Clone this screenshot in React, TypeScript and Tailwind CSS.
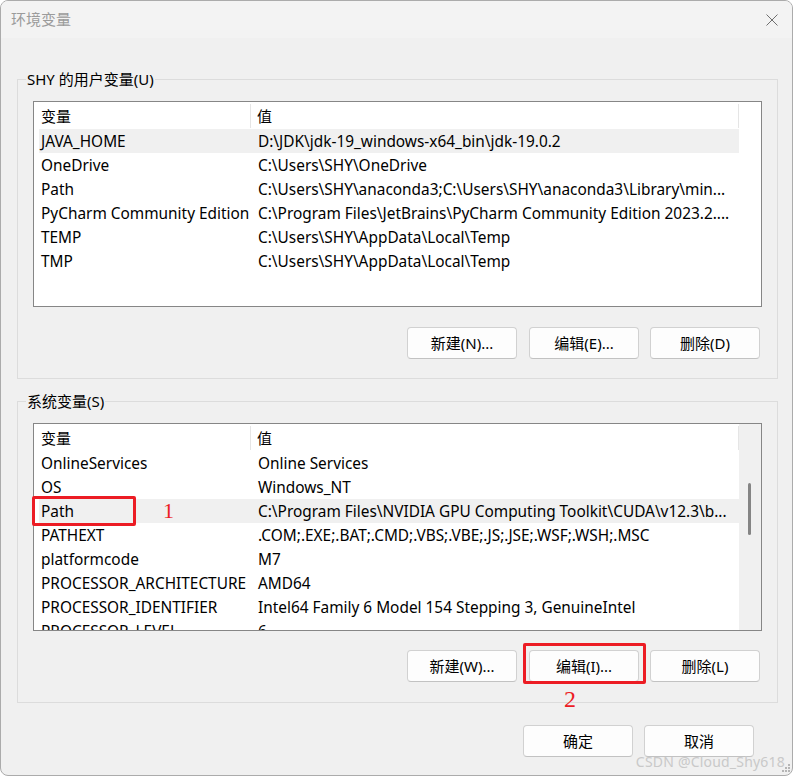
import React from 'react';

type Row = [string, string];

const userVars: Row[] = [
  ['JAVA_HOME', 'D:\\JDK\\jdk-19_windows-x64_bin\\jdk-19.0.2'],
  ['OneDrive', 'C:\\Users\\SHY\\OneDrive'],
  ['Path', 'C:\\Users\\SHY\\anaconda3;C:\\Users\\SHY\\anaconda3\\Library\\min...'],
  ['PyCharm Community Edition', 'C:\\Program Files\\JetBrains\\PyCharm Community Edition 2023.2....'],
  ['TEMP', 'C:\\Users\\SHY\\AppData\\Local\\Temp'],
  ['TMP', 'C:\\Users\\SHY\\AppData\\Local\\Temp'],
];

const sysVars: Row[] = [
  ['OnlineServices', 'Online Services'],
  ['OS', 'Windows_NT'],
  ['Path', 'C:\\Program Files\\NVIDIA GPU Computing Toolkit\\CUDA\\v12.3\\b...'],
  ['PATHEXT', '.COM;.EXE;.BAT;.CMD;.VBS;.VBE;.JS;.JSE;.WSF;.WSH;.MSC'],
  ['platformcode', 'M7'],
  ['PROCESSOR_ARCHITECTURE', 'AMD64'],
  ['PROCESSOR_IDENTIFIER', 'Intel64 Family 6 Model 154 Stepping 3, GenuineIntel'],
  ['PROCESSOR_LEVEL', '6'],
];

// 列表框：表头 + 行，可选滚动条
function VarList({
  rows,
  selected,
  scroll,
  heightClass,
  children,
}: {
  rows: Row[];
  selected: number;
  scroll?: boolean;
  heightClass: string;
  children?: React.ReactNode;
}) {
  return (
    <div className={`relative ${heightClass} border border-[#868686] bg-white flex`}>
      <div className="w-[705px] overflow-hidden flex flex-col">
        <div className="ml-[5px] h-[27px] shrink-0 flex items-stretch pt-[2px] pb-[1px] text-[15px]">
          <div className="w-[212px] pl-[2px] flex items-center border-r border-[#e5e5e5]">变量</div>
          <div className="flex-1 pl-[6px] flex items-center border-r border-[#e5e5e5]">值</div>
        </div>
        {rows.map(([name, value], i) => (
          <div
            key={name + i}
            className={`ml-[5px] h-[24px] shrink-0 flex items-center pt-[2px] text-[15.4px] whitespace-nowrap ${
              i === selected ? 'bg-[#f0f0f0]' : ''
            }`}
          >
            <div className="w-[212px] pl-[2px] overflow-hidden">{name}</div>
            <div className="flex-1 pl-[7px] overflow-hidden">{value}</div>
          </div>
        ))}
      </div>
      {scroll ? (
        <div className="flex-1 bg-[#f0f0f0] pt-[59px]">
          <div className="ml-[9px] w-[3px] h-[52px] rounded-full bg-[#858585]" />
        </div>
      ) : (
        <div className="flex-1" />
      )}
      {children}
    </div>
  );
}

function Btn({ label }: { label: string }) {
  return (
    <button className="w-[110px] h-[32px] rounded-[4px] border border-[#d1d1d1] border-b-[#c2c2c2] bg-[#fdfdfd] text-[15px] text-black flex items-center justify-center">
      {label}
    </button>
  );
}

function Group({ label, children, className }: { label: string; children: React.ReactNode; className?: string }) {
  return (
    <div className={`relative border border-[#dcdcdc] ${className ?? ''}`}>
      <span className="absolute left-[8px] -top-[12px] px-[1px] bg-[#f0f0f0] text-[15px] leading-[22px]">
        {label}
      </span>
      {children}
    </div>
  );
}

export default function App() {
  return (
    <div
      className="w-[794px] h-[777px] bg-white text-black"
      style={{ fontFamily: '"Noto Sans", "Noto Sans CJK SC", sans-serif' }}
    >
      <div className="relative w-[793px] h-[776px] rounded-[8px] border border-[#ababab] bg-[#f0f0f0] overflow-hidden flex flex-col">
        {/* 标题栏 */}
        <div className="h-[37px] shrink-0 flex items-center justify-between pl-[10px] pr-[14px] bg-[#f3f3f3]">
          <span className="text-[15px] text-[#9b9b9b]">环境变量</span>
          <svg width="12" height="12" viewBox="0 0 12 12" className="mt-[1px]">
            <path d="M0.5 0.5 L11.5 11.5 M11.5 0.5 L0.5 11.5" stroke="#6f6f6f" strokeWidth="1" />
          </svg>
        </div>

        <div className="pl-[16px] pr-[14px] flex flex-col">
          {/* 用户变量 */}
          <Group label="SHY 的用户变量(U)" className="mt-[41px] h-[300px] pt-[21px] pl-[15px] pr-[15px]">
            <VarList rows={userVars} selected={0} heightClass="h-[206px]" />
            <div className="mt-[20px] flex justify-end gap-[11px] pr-[2px]">
              <div className="mr-[1px]">
                <Btn label="新建(N)..." />
              </div>
              <Btn label="编辑(E)..." />
              <Btn label="删除(D)" />
            </div>
          </Group>

          {/* 系统变量 */}
          <Group label="系统变量(S)" className="mt-[22px] h-[302px] pt-[21px] pl-[15px] pr-[15px]">
            <VarList rows={sysVars} selected={2} scroll heightClass="h-[208px]">
              <div className="absolute left-[-2px] top-[72px] w-[104px] h-[30px] border-[3px] border-[#ec1c24] rounded-[2px]" />
              <span
                className="absolute left-[129px] top-[72px] text-[22px] leading-[30px] text-[#ec1c24]"
                style={{ fontFamily: '"Liberation Serif", serif' }}
              >
                1
              </span>
            </VarList>
            <div className="mt-[19px] flex justify-end gap-[11px] pr-[2px]">
              <div className="mr-[1px]">
                <Btn label="新建(W)..." />
              </div>
              <div className="relative">
                <Btn label="编辑(I)..." />
                <div className="absolute -left-[6px] -right-[7px] -top-[7px] -bottom-[2px] border-[3px] border-[#ec1c24] rounded-[2px]" />
                <span
                  className="absolute left-[35px] top-[37px] text-[24px] leading-[24px] text-[#ec1c24]"
                  style={{ fontFamily: '"Liberation Serif", serif' }}
                >
                  2
                </span>
              </div>
              <Btn label="删除(L)" />
            </div>
          </Group>

          {/* 确定 / 取消 */}
          <div className="mt-[22px] flex justify-end gap-[11px] pr-[24px]">
            <Btn label="确定" />
            <Btn label="取消" />
          </div>
        </div>

        {/* 水印 */}
        <span className="absolute right-[7px] bottom-[3px] text-[14px] text-[#c9c9c9] tracking-[0.2px]">
          CSDN @Cloud_Shy618
        </span>
        <svg width="9" height="9" viewBox="0 0 9 9" className="absolute right-[1px] bottom-[2px]">
          <rect x="6" y="0" width="2" height="2" fill="#b5b5b5" />
          <rect x="3" y="3" width="2" height="2" fill="#b5b5b5" />
          <rect x="6" y="3" width="2" height="2" fill="#b5b5b5" />
          <rect x="0" y="6" width="2" height="2" fill="#b5b5b5" />
          <rect x="3" y="6" width="2" height="2" fill="#b5b5b5" />
          <rect x="6" y="6" width="2" height="2" fill="#b5b5b5" />
        </svg>
      </div>
    </div>
  );
}
